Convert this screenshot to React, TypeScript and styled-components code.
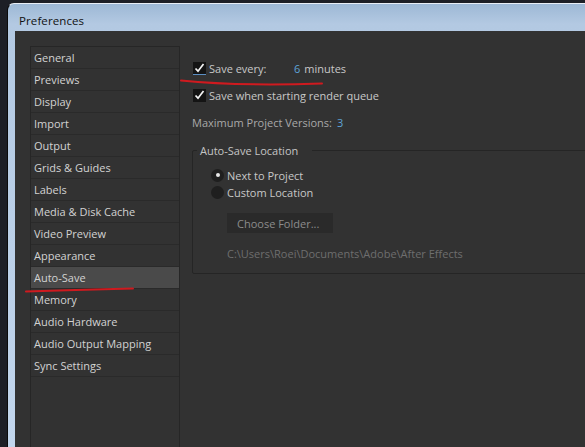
import React from "react";
import styled, { createGlobalStyle } from "styled-components";

const Global = createGlobalStyle`
  html, body { margin: 0; padding: 0; background: #2b2b2e; }
  body { font-family: "Open Sans", "Noto Sans", "DejaVu Sans", sans-serif; }
  #root { width: 585px; height: 447px; overflow: hidden; }
`;

const Desktop = styled.div`
  position: relative;
  width: 585px;
  height: 447px;
  overflow: hidden;
  background: #1d1f26;
  padding: 3px 0 0 7px;
  box-sizing: border-box;
  display: flex;
`;

const Window = styled.div`
  flex: 1;
  display: flex;
  flex-direction: column;
  border-left: 1px solid #0a0a0a;
  border-top: 1px solid #e8eef6;
  border-radius: 7px 0 0 0;
  background: linear-gradient(180deg, #9db8d5 0px, #b3c9e2 20px, #c2d6ed 100%);
  min-width: 0;
`;

const TitleBar = styled.div`
  height: 27px;
  flex: none;
  display: flex;
  align-items: center;
  padding-left: 11px;
  padding-top: 5px;
  box-sizing: border-box;
  font-size: 11.5px;
  color: #111;
  letter-spacing: 0.1px;
`;

const Body = styled.div`
  flex: 1;
  margin-left: 7px;
  background: #323232;
  display: flex;
  padding: 15px 0 0 15px;
  min-height: 0;
`;

const Sidebar = styled.div`
  width: 148px;
  flex: none;
  border: 1px solid #262626;
  border-bottom: none;
  display: flex;
  flex-direction: column;
`;

const Item = styled.div<{ $active?: boolean }>`
  height: 22px;
  flex: none;
  box-sizing: border-box;
  border-bottom: 1px solid #2a2a2a;
  padding-left: 3px;
  line-height: 21px;
  font-size: 11px;
  color: #d2d2d2;
  background: ${(p) => (p.$active ? "#4a4a4a" : "transparent")};
  white-space: nowrap;
`;

const Content = styled.div`
  flex: 1;
  padding: 14px 0 0 12px;
  display: flex;
  flex-direction: column;
  min-width: 0;
  font-size: 11px;
  color: #c4c4c4;
`;

const Row = styled.div<{ $mt?: number }>`
  display: flex;
  align-items: center;
  height: 16px;
  margin-top: ${(p) => p.$mt ?? 0}px;
  white-space: nowrap;
`;

const Check = styled.span<{ $focus?: boolean }>`
  width: 13px;
  height: 13px;
  margin-left: 1px;
  margin-right: 3px;
  background: #141414;
  box-sizing: border-box;
  border-bottom: 1px solid ${(p) => (p.$focus ? "#5b8fc4" : "#141414")};
  display: inline-flex;
  align-items: center;
  justify-content: center;
  flex: none;
`;

const Label = styled.span<{ $w?: number; $muted?: boolean }>`
  display: inline-block;
  width: ${(p) => (p.$w ? `${p.$w}px` : "auto")};
  color: ${(p) => (p.$muted ? "#a9a9a9" : "#c8c8c8")};
`;

const Num = styled.span`
  color: #5ea3d8;
  margin-right: 4px;
`;

const Group = styled.fieldset`
  margin: 13px 0 0 0;
  width: 520px;
  height: 131px;
  box-sizing: border-box;
  border: 1px solid #252525;
  border-radius: 2px;
  padding: 0 0 0 18px;
  display: flex;
  flex-direction: column;
`;

const Legend = styled.legend`
  font-size: 11px;
  color: #c4c4c4;
  padding: 0 14px 0 3px;
  margin-left: -14px;
`;

const Radio = styled.span<{ $on?: boolean }>`
  width: 13px;
  height: 13px;
  border-radius: 50%;
  background: #1f1f1f;
  margin-right: 3px;
  display: inline-flex;
  align-items: center;
  justify-content: center;
  flex: none;
  &::after {
    content: "";
    width: 4px;
    height: 4px;
    border-radius: 50%;
    background: ${(p) => (p.$on ? "#e8e8e8" : "transparent")};
  }
`;

const Button = styled.div`
  margin: 13px 0 0 16px;
  width: 106px;
  height: 20px;
  background: #2a2a2a;
  color: #8c8c8c;
  font-size: 11px;
  display: flex;
  align-items: center;
  padding-left: 10px;
  box-sizing: border-box;
`;

const Path = styled.div`
  margin: 13px 0 0 16px;
  color: #6e6e6e;
  font-size: 11px;
  white-space: nowrap;
`;

const Marks = styled.svg`
  position: absolute;
  left: 0;
  top: 0;
  pointer-events: none;
`;

const items = [
  "General",
  "Previews",
  "Display",
  "Import",
  "Output",
  "Grids & Guides",
  "Labels",
  "Media & Disk Cache",
  "Video Preview",
  "Appearance",
  "Auto-Save",
  "Memory",
  "Audio Hardware",
  "Audio Output Mapping",
  "Sync Settings",
];

const Tick = () => (
  <svg width="11" height="10" viewBox="0 0 11 10">
    <path d="M1.5 5.5 L4 8.2 L9.5 1" fill="none" stroke="#f4f4f4" strokeWidth="1.7" />
  </svg>
);

export default function App() {
  return (
    <>
      <Global />
      <Desktop>
        <Window>
          <TitleBar>Preferences</TitleBar>
          <Body>
            <Sidebar>
              {items.map((t) => (
                <Item key={t} $active={t === "Auto-Save"}>
                  {t}
                </Item>
              ))}
            </Sidebar>
            <Content>
              <Row>
                <Check $focus>
                  <Tick />
                </Check>
                <Label $w={85}>Save every:</Label>
                <Num>6</Num>
                <Label>minutes</Label>
              </Row>
              <Row $mt={11}>
                <Check>
                  <Tick />
                </Check>
                <Label>Save when starting render queue</Label>
              </Row>
              <Row $mt={11}>
                <Label $muted $w={145}>Maximum Project Versions:</Label>
                <Num>3</Num>
              </Row>
              <Group>
                <Legend>Auto-Save Location</Legend>
                <Row $mt={9}>
                  <Radio $on />
                  <Label>Next to Project</Label>
                </Row>
                <Row $mt={1}>
                  <Radio />
                  <Label>Custom Location</Label>
                </Row>
                <Button>Choose Folder...</Button>
                <Path>C:\Users\Roei\Documents\Adobe\After Effects</Path>
              </Group>
            </Content>
          </Body>
        </Window>
        <Marks width="585" height="447" viewBox="0 0 585 447">
          <path d="M181 80.5 C 215 84, 260 85.5, 322 83.5" fill="none" stroke="#cf1a1f" strokeWidth="2" strokeLinecap="round" />
          <path d="M26 291.5 C 60 290.5, 100 289.5, 133 288.5" fill="none" stroke="#cf1a1f" strokeWidth="2" strokeLinecap="round" />
        </Marks>
      </Desktop>
    </>
  );
}
